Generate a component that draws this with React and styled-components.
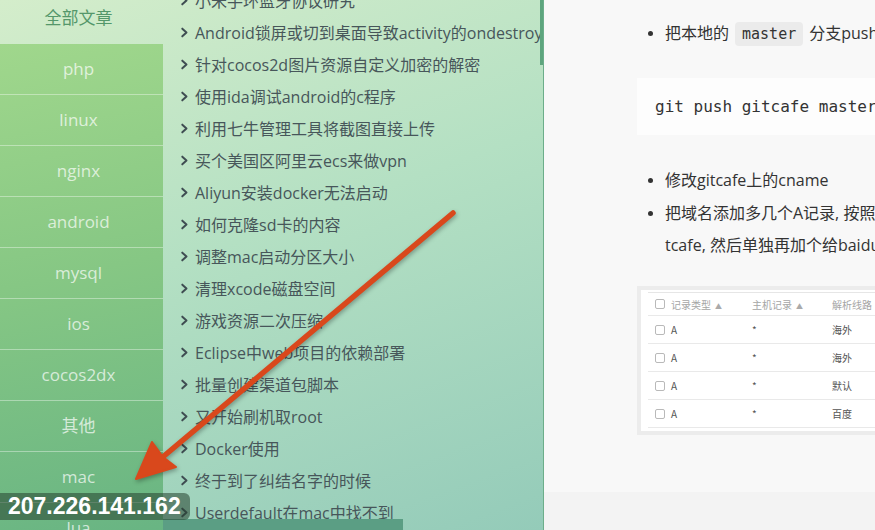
import React from "react";
import styled, { createGlobalStyle } from "styled-components";

const Global = createGlobalStyle`
  html, body { margin: 0; padding: 0; }
  body { width: 875px; height: 530px; overflow: hidden; background: #f7f7f7;
    font-family: "Open Sans", "Noto Sans CJK SC", sans-serif; }
`;

const Page = styled.div`
  position: relative;
  display: flex;
  width: 875px;
  height: 530px;
  overflow: hidden;
`;

const LeftPane = styled.div`
  position: relative;
  display: flex;
  width: 543px;
  flex: none;
  height: 530px;
  overflow: hidden;
  border-right: 1px solid #6cae8a;
  background: linear-gradient(160deg, #d4edcb 0%, #b4e0c3 45%, #94cbb9 100%);
`;

const Categories = styled.nav`
  width: 163px;
  flex: none;
  display: flex;
  flex-direction: column;
`;

const AllHeader = styled.div`
  height: 44px;
  flex: none;
  line-height: 35px;
  text-align: center;
  padding-right: 6px;
  font-size: 17px;
  color: #54976a;
`;

const CatList = styled.div`
  flex: none;
  display: flex;
  flex-direction: column;
  background: linear-gradient(168deg, #a0d78c 0%, #86c784 45%, #66b383 100%);
`;

const CatItem = styled.div`
  height: 50px;
  flex: none;
  line-height: 50px;
  text-align: center;
  padding-right: 6px;
  font-size: 17px;
  color: rgba(255, 255, 255, 0.7);
  border-bottom: 1px solid rgba(255, 255, 255, 0.38);
`;

const Articles = styled.ul`
  flex: 1;
  list-style: none;
  margin: -16px 0 0;
  padding: 0 0 0 16px;
  white-space: nowrap;
`;

const ArticleRow = styled.li`
  height: 32px;
  display: flex;
  align-items: center;
  gap: 5px;
  font-size: 16px;
  color: #47565a;
`;

const Chevron = styled.svg`
  width: 11px;
  height: 11px;
  flex: none;
  margin-top: 1px;
`;

const ScrollThumb = styled.div`
  position: absolute;
  right: 0;
  top: 0;
  width: 3px;
  height: 65px;
  background: #5ea57e;
`;

const HScroll = styled.div`
  position: absolute;
  left: 163px;
  bottom: 0;
  width: 240px;
  height: 11px;
  background: #5b9e84;
`;

const Main = styled.main`
  flex: 1;
  display: flex;
  flex-direction: column;
  background: #f8f8f8;
  overflow: hidden;
  position: relative;
`;

const Article = styled.article`
  flex: 1;
  padding: 17px 0 0 93px;
  width: 560px;
  color: #333;
  font-size: 16px;
`;

const Bullets = styled.ul`
  margin: 0;
  padding-left: 28px;
  line-height: 32px;
  white-space: nowrap;
  & > li { margin-bottom: 1px; }
  & > li::marker { color: #333; font-size: 14px; }
`;

const InlineCode = styled.code`
  font-family: "DejaVu Sans Mono", monospace;
  font-size: 15px;
  background: #ebebeb;
  border-radius: 4px;
  padding: 3px 7px;
  margin: 0 6px;
`;

const CodeBlock = styled.pre`
  margin: 28px 0 29px;
  padding: 18px;
  background: #fdfdfd;
  font-family: "DejaVu Sans Mono", monospace;
  font-size: 16px;
  line-height: 21px;
  color: #333;
`;

const Shot = styled.div`
  margin-top: 25px;
  width: 420px;
  border: 4px solid #ececec;
  border-right: none;
  background: #fff;
  padding: 2px 0 3px 7px;
`;

const Table = styled.div`
  border-top: 1px solid #e6e6e6;
  font-family: "Noto Sans CJK SC", sans-serif;
  font-size: 10px;
`;

const TRow = styled.div`
  display: grid;
  grid-template-columns: 23px 81px 80px 1fr;
  align-items: center;
  height: ${(p) => (p.$head ? 22 : 27)}px;
  border-bottom: 1px solid #e9e9e9;
  color: ${(p) => (p.$head ? "#a5a5a5" : "#555")};
`;

const Check = styled.span`
  display: block;
  width: 8px;
  height: 8px;
  border: 1px solid #b9b9b9;
  border-radius: 2px;
  margin-left: 7px;
`;

const Sort = styled.span`
  font-size: 7px;
  margin-left: 4px;
  color: #aaa;
`;

const Footer = styled.footer`
  height: 38px;
  flex: none;
  background: #f3f3f3;
`;

const Badge = styled.div`
  position: absolute;
  left: 0;
  top: 493px;
  height: 27px;
  padding: 0 9px 0 8px;
  border-radius: 0 6px 6px 0;
  background: rgba(38, 66, 48, 0.55);
  color: #fff;
  font-family: "Liberation Sans", Arial, sans-serif;
  font-weight: bold;
  font-size: 23px;
  line-height: 27px;
`;

const ArrowSvg = styled.svg`
  position: absolute;
  left: 0;
  top: 0;
  width: 875px;
  height: 530px;
  pointer-events: none;
  filter: drop-shadow(1px 2px 2px rgba(0, 0, 0, 0.3));
`;

const categories = ["php", "linux", "nginx", "android", "mysql", "ios", "cocos2dx", "其他", "mac", "lua"];

const titles = [
  "小米手环蓝牙协议研究",
  "Android锁屏或切到桌面导致activity的ondestroy",
  "针对cocos2d图片资源自定义加密的解密",
  "使用ida调试android的c程序",
  "利用七牛管理工具将截图直接上传",
  "买个美国区阿里云ecs来做vpn",
  "Aliyun安装docker无法启动",
  "如何克隆sd卡的内容",
  "调整mac启动分区大小",
  "清理xcode磁盘空间",
  "游戏资源二次压缩",
  "Eclipse中web项目的依赖部署",
  "批量创建渠道包脚本",
  "又开始刷机取root",
  "Docker使用",
  "终于到了纠结名字的时候",
  "Userdefault在mac中找不到",
];

const rows = [
  ["A", "*", "海外"],
  ["A", "*", "海外"],
  ["A", "*", "默认"],
  ["A", "*", "百度"],
];

export default function App() {
  return (
    <>
      <Global />
      <Page>
        <LeftPane>
          <Categories>
            <AllHeader>全部文章</AllHeader>
            <CatList>
              {categories.map((c) => (
                <CatItem key={c}>{c}</CatItem>
              ))}
            </CatList>
          </Categories>
          <Articles>
            {titles.map((t) => (
              <ArticleRow key={t}>
                <Chevron viewBox="0 0 10 10">
                  <path d="M3 1.5 L6.8 5 L3 8.5" fill="none" stroke="#3f4d52" strokeWidth="1.8" strokeLinecap="round" strokeLinejoin="round" />
                </Chevron>
                {t}
              </ArticleRow>
            ))}
          </Articles>
          <ScrollThumb />
          <HScroll />
        </LeftPane>
        <Main>
          <Article>
            <Bullets>
              <li>
                把本地的<InlineCode>master</InlineCode>分支push到gitcafe的gitcafe-pages分支
              </li>
            </Bullets>
            <CodeBlock>git push gitcafe master:gitcafe-pages</CodeBlock>
            <Bullets>
              <li>修改gitcafe上的cname</li>
              <li>
                把域名添加多几个A记录, 按照线路类型分别解析到github和gi
                <br />
                tcafe, 然后单独再加个给baidu的解析
              </li>
            </Bullets>
            <Shot>
              <Table>
                <TRow $head>
                  <Check />
                  <span>记录类型<Sort>▲</Sort></span>
                  <span>主机记录<Sort>▲</Sort></span>
                  <span>解析线路<Sort>▲</Sort></span>
                </TRow>
                {rows.map((r, i) => (
                  <TRow key={i}>
                    <Check />
                    <span>{r[0]}</span>
                    <span>{r[1]}</span>
                    <span>{r[2]}</span>
                  </TRow>
                ))}
              </Table>
            </Shot>
          </Article>
          <Footer />
        </Main>
        <ArrowSvg viewBox="0 0 875 530">
          <line x1="453" y1="213" x2="158" y2="461" stroke="#d9481c" strokeWidth="5.5" strokeLinecap="round" />
          <polygon points="136,479 152,442 163,457 176,467" fill="#d9481c" stroke="#d9481c" strokeWidth="2" strokeLinejoin="round" />
        </ArrowSvg>
        <Badge>207.226.141.162</Badge>
      </Page>
    </>
  );
}
